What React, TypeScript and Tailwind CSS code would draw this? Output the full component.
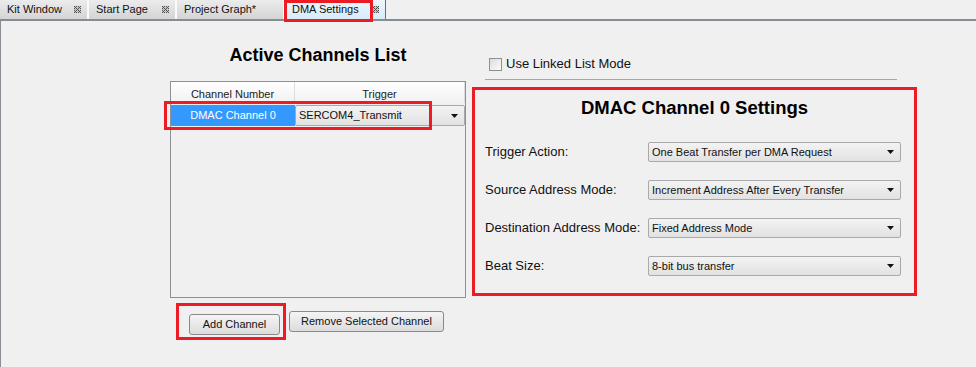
import React from 'react';

const CloseIcon = () => (
  <svg width="7" height="7" viewBox="0 0 7 7" className="shrink-0">
    <rect width="7" height="7" fill="#c4c4c4" />
    <path d="M0 0h1v1H0zM2 0h1v1H2zM4 0h1v1H4zM6 0h1v1H6zM1 1h1v1H1zM5 1h1v1H5zM2 2h1v1H2zM4 2h1v1H4zM3 3h1v1H3zM2 4h1v1H2zM4 4h1v1H4zM1 5h1v1H1zM5 5h1v1H5zM0 6h1v1H0zM2 6h1v1H2zM4 6h1v1H4zM6 6h1v1H6zM0 2h1v1H0zM0 4h1v1H0zM6 2h1v1H6zM6 4h1v1H6z" fill="#555" />
  </svg>
);

const Arrow = () => (
  <svg width="7" height="4" viewBox="0 0 7 4" className="shrink-0">
    <path d="M0 0h7L3.5 4z" fill="#111" />
  </svg>
);

const Tab: React.FC<{ label: string; w: string; active?: boolean; close?: boolean }> = ({ label, w, active, close = true }) => (
  <div
    className={`${w} h-[19px] flex items-center justify-between pl-[7px] pr-[6px] text-[11px] text-[#111] ${
      active
        ? 'bg-gradient-to-b from-[#eef7fd] to-[#d6ebf9] border-r border-[#3d7ab0]'
        : 'bg-gradient-to-b from-[#ececec] to-[#d4d4d4] border-r-2 border-[#fafafa]'
    }`}
  >
    <span>{label}</span>
    {close && <CloseIcon />}
  </div>
);

const Combo: React.FC<{ value: string; className?: string; size?: string }> = ({ value, className = '', size = 'text-[11px]' }) => (
  <div
    className={`h-[20px] flex items-center justify-between pl-[3px] pr-[6px] border border-[#a9a9a9] rounded-[2px] bg-gradient-to-b from-[#f3f3f3] to-[#e2e2e2] ${size} text-[#111] ${className}`}
  >
    <span>{value}</span>
    <Arrow />
  </div>
);

const settings = [
  { label: 'Trigger Action:', value: 'One Beat Transfer per DMA Request' },
  { label: 'Source Address Mode:', value: 'Increment Address After Every Transfer' },
  { label: 'Destination Address Mode:', value: 'Fixed Address Mode' },
  { label: 'Beat Size:', value: '8-bit bus transfer' },
];

export default function App() {
  return (
    <div className="w-[976px] h-[367px] bg-[#f0f0f0] overflow-hidden flex flex-col" style={{ fontFamily: '"Liberation Sans", Arial, sans-serif' }}>
      {/* tab strip */}
      <div className="h-[21px] flex items-start border-b-2 border-[#878b93] bg-[#f0f0f0]">
        <Tab label="Kit Window" w="w-[89px]" />
        <Tab label="Start Page" w="w-[88px]" />
        <Tab label="Project Graph*" w="w-[108px]" close={false} />
        <div className="relative">
          <Tab label="DMA Settings" w="w-[101px]" active />
          <div className="absolute left-[-1px] top-0 w-[89px] h-[22px] border-[3px] border-[#ed1c24] pointer-events-none" />
        </div>
      </div>

      {/* body */}
      <div className="flex-1 flex border-l border-[#8a8e95]">
        {/* left column */}
        <div className="ml-[169px] w-[296px] flex flex-col">
          <div className="mt-[23px] h-[22px] text-center text-[18px] font-bold text-black leading-[22px]">Active Channels List</div>
          <div className="mt-[15px] h-[217px] border border-[#8f9096] flex flex-col">
            <div className="flex h-[21px] bg-gradient-to-b from-white to-[#f1f1f1] text-[11px] text-[#222]">
              <div className="w-[124px] flex items-end justify-center pb-[1px] border-r border-[#dcdcdc]">Channel Number</div>
              <div className="flex-1 flex items-end justify-center pb-[1px] border-r border-[#dcdcdc]">Trigger</div>
            </div>
            <div className="relative flex h-[21px] mt-[2px]">
              <div className="w-[124px] bg-[#3399ff] text-white text-[11px] flex items-center justify-center">DMAC Channel 0</div>
              <Combo value="SERCOM4_Transmit" className="flex-1 h-[21px]" size="text-[11px]" />
              <div className="absolute left-[-7px] top-[-4px] w-[268px] h-[29px] border-[3px] border-[#ed1c24] pointer-events-none" />
            </div>
          </div>
          <div className="mt-[13px] flex gap-[9px] pl-[19px]">
            <div className="relative">
              <button className="w-[91px] h-[21px] border border-[#8a8a8a] rounded-[3px] bg-gradient-to-b from-[#f4f4f4] to-[#dcdcdc] text-[11px] text-[#111]">Add Channel</button>
              <div className="absolute left-[-13px] top-[-8px] w-[110px] h-[37px] border-[3px] border-[#ed1c24] pointer-events-none" />
            </div>
            <button className="w-[155px] h-[21px] border border-[#8a8a8a] rounded-[3px] bg-gradient-to-b from-[#f4f4f4] to-[#dcdcdc] text-[11px] text-[#111]">Remove Selected Channel</button>
          </div>
        </div>

        {/* right column */}
        <div className="ml-[6px] w-[445px] flex flex-col">
          <div className="mt-[36px] flex items-center pl-[17px] h-[14px]">
            <div className="w-[13px] h-[13px] border border-[#8f8f8f] bg-gradient-to-br from-[#dcdcdc] to-[#fbfbfb]" />
            <span className="ml-[4px] text-[13px] text-[#111]">Use Linked List Mode</span>
          </div>
          <div className="mt-[8px] ml-[13px] w-[412px] h-px bg-[#a6a6a6]" />
          <div className="mt-[7px] h-[209px] border-[3px] border-[#ed1c24] flex flex-col">
            <div className="mt-[7px] h-[22px] leading-[22px] text-center text-[18.5px] font-bold text-black">DMAC Channel 0 Settings</div>
            <div className="mt-[23px] flex flex-col gap-[18px] pl-[10px]">
              {settings.map((s) => (
                <div key={s.label} className="flex items-center h-[20px]">
                  <span className="w-[163px] text-[13px] text-[#111]">{s.label}</span>
                  <Combo value={s.value} className="w-[253px]" />
                </div>
              ))}
            </div>
          </div>
        </div>
      </div>
    </div>
  );
}
